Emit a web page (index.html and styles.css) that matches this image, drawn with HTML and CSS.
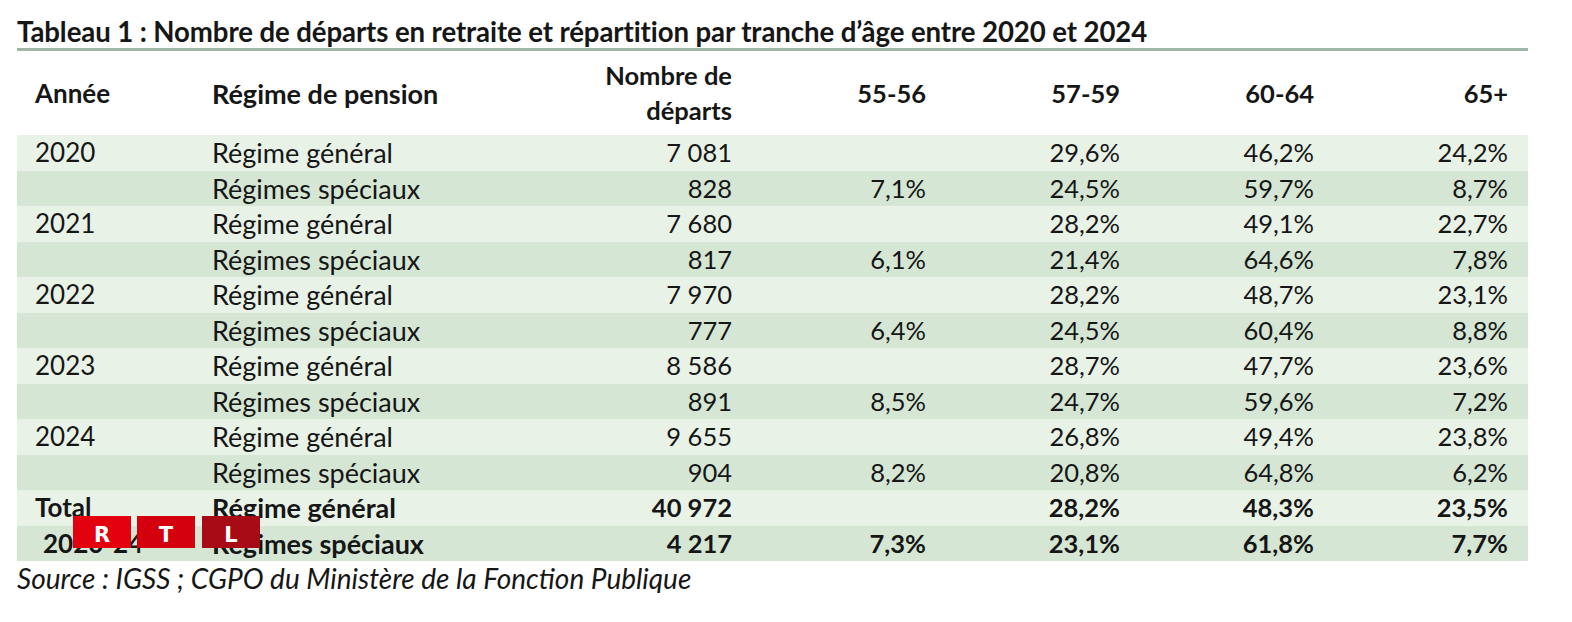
FILE: index.html
```html
<!DOCTYPE html>
<html lang="fr">
<head>
<meta charset="utf-8">
<title>Tableau 1</title>
<link rel="stylesheet" href="styles.css">
</head>
<body>
<div class="page">
  <h1 class="title">Tableau 1 : Nombre de départs en retraite et répartition par tranche d’âge entre 2020 et 2024</h1>
  <div class="table-wrap">
    <table class="data">
      <colgroup>
        <col class="c-year"><col class="c-reg"><col class="c-num"><col class="c-pct"><col class="c-pct"><col class="c-pct"><col class="c-pct">
      </colgroup>
      <thead>
        <tr>
          <th class="l year">Année</th>
          <th class="l reg">Régime de pension</th>
          <th class="r">Nombre de<br>départs</th>
          <th class="r">55-56</th>
          <th class="r">57-59</th>
          <th class="r">60-64</th>
          <th class="r">65+</th>
        </tr>
      </thead>
      <tbody>
        <tr class="lt"><td class="year">2020</td><td class="reg">Régime général</td><td class="r">7 081</td><td class="r"></td><td class="r">29,6%</td><td class="r">46,2%</td><td class="r">24,2%</td></tr>
        <tr class="dk"><td class="year"></td><td class="reg">Régimes spéciaux</td><td class="r">828</td><td class="r">7,1%</td><td class="r">24,5%</td><td class="r">59,7%</td><td class="r">8,7%</td></tr>
        <tr class="lt"><td class="year">2021</td><td class="reg">Régime général</td><td class="r">7 680</td><td class="r"></td><td class="r">28,2%</td><td class="r">49,1%</td><td class="r">22,7%</td></tr>
        <tr class="dk"><td class="year"></td><td class="reg">Régimes spéciaux</td><td class="r">817</td><td class="r">6,1%</td><td class="r">21,4%</td><td class="r">64,6%</td><td class="r">7,8%</td></tr>
        <tr class="lt"><td class="year">2022</td><td class="reg">Régime général</td><td class="r">7 970</td><td class="r"></td><td class="r">28,2%</td><td class="r">48,7%</td><td class="r">23,1%</td></tr>
        <tr class="dk"><td class="year"></td><td class="reg">Régimes spéciaux</td><td class="r">777</td><td class="r">6,4%</td><td class="r">24,5%</td><td class="r">60,4%</td><td class="r">8,8%</td></tr>
        <tr class="lt"><td class="year">2023</td><td class="reg">Régime général</td><td class="r">8 586</td><td class="r"></td><td class="r">28,7%</td><td class="r">47,7%</td><td class="r">23,6%</td></tr>
        <tr class="dk"><td class="year"></td><td class="reg">Régimes spéciaux</td><td class="r">891</td><td class="r">8,5%</td><td class="r">24,7%</td><td class="r">59,6%</td><td class="r">7,2%</td></tr>
        <tr class="lt"><td class="year">2024</td><td class="reg">Régime général</td><td class="r">9 655</td><td class="r"></td><td class="r">26,8%</td><td class="r">49,4%</td><td class="r">23,8%</td></tr>
        <tr class="dk"><td class="year"></td><td class="reg">Régimes spéciaux</td><td class="r">904</td><td class="r">8,2%</td><td class="r">20,8%</td><td class="r">64,8%</td><td class="r">6,2%</td></tr>
        <tr class="lt total"><td class="year">Total</td><td class="reg">Régime général</td><td class="r">40 972</td><td class="r"></td><td class="r">28,2%</td><td class="r">48,3%</td><td class="r">23,5%</td></tr>
        <tr class="dk total"><td class="year period">2020-24</td><td class="reg">Régimes spéciaux</td><td class="r">4 217</td><td class="r">7,3%</td><td class="r">23,1%</td><td class="r">61,8%</td><td class="r">7,7%</td></tr>
      </tbody>
    </table>
    <div class="rtl-logo" aria-label="RTL">
      <span class="box b-r">R</span><span class="box b-t">T</span><span class="box b-l">L</span>
    </div>
  </div>
  <p class="source">Source : IGSS ; CGPO du Ministère de la Fonction Publique</p>
</div>
</body>
</html>
```

FILE: styles.css
```css
html, body {
  margin: 0;
  padding: 0;
  background: #ffffff;
}

body {
  font-family: Lato, "Open Sans", "Liberation Sans", sans-serif;
  color: #161616;
}

.page {
  padding: 15px 0 0 17px;
  width: 1511px;
}

.title {
  margin: 0;
  font-size: 27.6px;
  font-weight: 700;
  line-height: 33px;
  height: 33px;
  border-bottom: 3px solid #9db6a8;
  white-space: nowrap;
  letter-spacing: -0.1px;
}

.table-wrap {
  position: relative;
}

.data {
  width: 1511px;
  border-collapse: collapse;
  table-layout: fixed;
  font-size: 25.5px;
}

.c-year { width: 178px; }
.c-reg { width: 365px; }
.c-num { width: 192px; }
.c-pct { width: 194px; }

.data th,
.data td {
  padding: 0 20px 0 17px;
  white-space: nowrap;
  vertical-align: middle;
}

.data th {
  font-weight: 700;
  height: 84px;
  line-height: 35px;
  padding-top: 0;
}

.data td {
  height: 35.5px;
  line-height: 35px;
}

.data .year {
  padding-left: 18px;
  font-size: 26px;
}

.data .reg {
  font-size: 27px;
}

.data .l { text-align: left; }
.data .r { text-align: right; }

.data tr.lt td { background: #e9f2e7; }
.data tr.dk td { background: #d5e6d4; }

.data tr.total td { font-weight: 700; }
.data td.period { padding-left: 26px; }

.rtl-logo {
  position: absolute;
  left: 56px;
  top: 465px;
  display: flex;
  gap: 6px;
}

.rtl-logo .box {
  width: 58px;
  height: 32px;
  box-sizing: border-box;
  padding-top: 7px;
  display: flex;
  align-items: center;
  justify-content: center;
  color: #ffffff;
  font-family: "DejaVu Sans", sans-serif;
  font-weight: 600;
  font-size: 21px;
  line-height: 1;
}

.b-r { background: #e3000f; }
.b-t { background: #d4000e; }
.b-l { background: #a80a16; margin-left: 1px; }

.source {
  margin: 2px 0 0 0;
  font-style: italic;
  font-size: 28px;
  line-height: 30px;
}
```
